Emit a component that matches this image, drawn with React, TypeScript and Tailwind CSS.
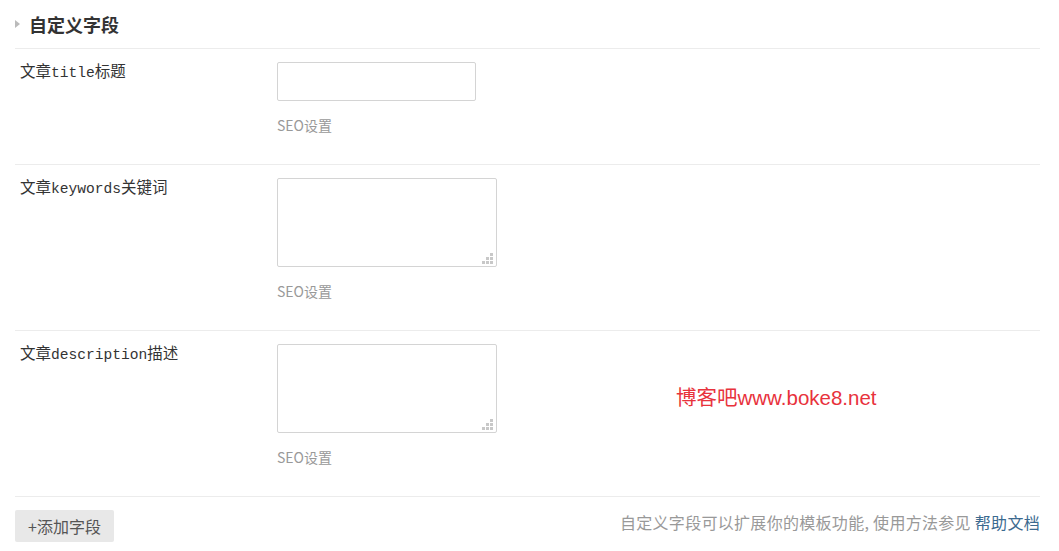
import React from "react";

const labelFont = { fontFamily: '"Liberation Mono", "Noto Sans CJK SC", monospace' };
const uiFont = { fontFamily: '"Noto Sans CJK SC", "Noto Sans", sans-serif' };

function Grip() {
  return (
    <svg className="absolute right-[4px] bottom-[3px]" width="11" height="11" viewBox="0 0 11 11">
      <rect x="8" y="0" width="3" height="3" fill="#c8c8c8" />
      <rect x="4" y="4" width="3" height="3" fill="#c8c8c8" />
      <rect x="8" y="4" width="3" height="3" fill="#c8c8c8" />
      <rect x="0" y="8" width="3" height="3" fill="#c8c8c8" />
      <rect x="4" y="8" width="3" height="3" fill="#c8c8c8" />
      <rect x="8" y="8" width="3" height="3" fill="#c8c8c8" />
    </svg>
  );
}

function Label({ pre, latin, post }: { pre: string; latin: string; post: string }) {
  return (
    <span>
      <span className="text-[15.5px]">{pre}</span>
      <span className="text-[14.6px]">{latin}</span>
      <span className="text-[15.5px]">{post}</span>
    </span>
  );
}

function Row({ label, kind }: { label: React.ReactNode; kind: "input" | "textarea" }) {
  return (
    <div className="flex border-t border-[#ececec] pt-[13px] pb-[29px]">
      <div className="w-[262px] shrink-0 pl-[5px] text-[15px] leading-[22px] text-[#333]" style={labelFont}>
        {label}
      </div>
      <div className="flex flex-col">
        {kind === "input" ? (
          <input className="block h-[39px] w-[199px] rounded-[2px] border border-[#d4d4d4] bg-white outline-none" />
        ) : (
          <div className="relative h-[89px] w-[220px]">
            <textarea className="block h-full w-full resize-none rounded-[2px] border border-[#d4d4d4] bg-white outline-none" />
            <Grip />
          </div>
        )}
        <div className="mt-[14px] text-[14px] leading-[20px] text-[#999]" style={uiFont}>
          SEO设置
        </div>
      </div>
    </div>
  );
}

export default function App() {
  return (
    <div className="relative h-[551px] w-[1059px] bg-white pl-[15px] pr-[19px]" style={uiFont}>
      <div className="flex h-[48px] items-center">
        <div className="mr-[9px] h-0 w-0 border-y-[4px] border-l-[5px] border-y-transparent border-l-[#bbbbbb]" />
        <div className="text-[18px] font-bold leading-[24px] text-[#333]">自定义字段</div>
      </div>
      <Row label={<Label pre="文章" latin="title" post="标题" />} kind="input" />
      <Row label={<Label pre="文章" latin="keywords" post="关键词" />} kind="textarea" />
      <Row label={<Label pre="文章" latin="description" post="描述" />} kind="textarea" />
      <div className="flex items-start justify-between border-t border-[#ececec] pt-[13px]">
        <button className="h-[32px] w-[99px] rounded-[2px] bg-[#e8e8e8] text-[16px] leading-[32px] text-[#555]">
          +添加字段
        </button>
        <div className="text-[16px] leading-[24px] tracking-[0.3px] text-[#999]">
          自定义字段可以扩展你的模板功能, 使用方法参见 <span className="text-[#3c6a8f]">帮助文档</span>
        </div>
      </div>
      <div
        className="absolute left-[676px] top-[385px] text-[20.5px] leading-[26px] text-[#e8323c]"
        style={{ fontFamily: '"Liberation Sans", "Noto Sans CJK SC", sans-serif' }}
      >
        博客吧www.boke8.net
      </div>
    </div>
  );
}
